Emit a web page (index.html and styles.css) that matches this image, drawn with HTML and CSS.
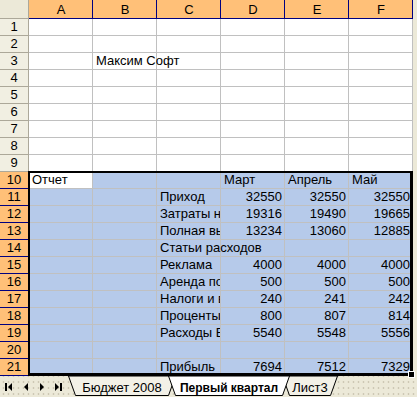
FILE: index.html
```html
<!DOCTYPE html>
<html lang="ru">
<head>
    <meta charset="UTF-8">
    <title>Первый квартал</title>
    <link rel="stylesheet" href="styles.css">
</head>
<body>
<div class="sheet">
    <div class="row head">
        <div class="corner"></div>
        <div class="colhead">A</div>
        <div class="colhead">B</div>
        <div class="colhead">C</div>
        <div class="colhead">D</div>
        <div class="colhead">E</div>
        <div class="colhead">F</div>
        <div class="edge"></div>
    </div>
    <div class="row">
        <div class="rowhead">1</div>
        <div class="cell"></div><div class="cell"></div><div class="cell"></div>
        <div class="cell"></div><div class="cell"></div><div class="cell"></div>
        <div class="edge"></div>
    </div>
    <div class="row">
        <div class="rowhead">2</div>
        <div class="cell"></div><div class="cell"></div><div class="cell"></div>
        <div class="cell"></div><div class="cell"></div><div class="cell"></div>
        <div class="edge"></div>
    </div>
    <div class="row">
        <div class="rowhead">3</div>
        <div class="cell"></div><div class="cell spill">Максим Софт</div><div class="cell"></div>
        <div class="cell"></div><div class="cell"></div><div class="cell"></div>
        <div class="edge"></div>
    </div>
    <div class="row">
        <div class="rowhead">4</div>
        <div class="cell"></div><div class="cell"></div><div class="cell"></div>
        <div class="cell"></div><div class="cell"></div><div class="cell"></div>
        <div class="edge"></div>
    </div>
    <div class="row">
        <div class="rowhead">5</div>
        <div class="cell"></div><div class="cell"></div><div class="cell"></div>
        <div class="cell"></div><div class="cell"></div><div class="cell"></div>
        <div class="edge"></div>
    </div>
    <div class="row">
        <div class="rowhead">6</div>
        <div class="cell"></div><div class="cell"></div><div class="cell"></div>
        <div class="cell"></div><div class="cell"></div><div class="cell"></div>
        <div class="edge"></div>
    </div>
    <div class="row">
        <div class="rowhead">7</div>
        <div class="cell"></div><div class="cell"></div><div class="cell"></div>
        <div class="cell"></div><div class="cell"></div><div class="cell"></div>
        <div class="edge"></div>
    </div>
    <div class="row">
        <div class="rowhead">8</div>
        <div class="cell"></div><div class="cell"></div><div class="cell"></div>
        <div class="cell"></div><div class="cell"></div><div class="cell"></div>
        <div class="edge"></div>
    </div>
    <div class="row">
        <div class="rowhead">9</div>
        <div class="cell"></div><div class="cell"></div><div class="cell"></div>
        <div class="cell"></div><div class="cell"></div><div class="cell"></div>
        <div class="edge"></div>
    </div>
    <div class="row sel">
        <div class="rowhead">10</div>
        <div class="cell active">Отчет</div><div class="cell"></div><div class="cell"></div>
        <div class="cell">Март</div><div class="cell">Апрель</div><div class="cell">Май</div>
        <div class="edge"></div>
    </div>
    <div class="row sel">
        <div class="rowhead">11</div>
        <div class="cell"></div><div class="cell"></div><div class="cell">Приход</div>
        <div class="cell num">32550</div><div class="cell num">32550</div><div class="cell num">32550</div>
        <div class="edge"></div>
    </div>
    <div class="row sel">
        <div class="rowhead">12</div>
        <div class="cell"></div><div class="cell"></div><div class="cell">Затраты на товары</div>
        <div class="cell num">19316</div><div class="cell num">19490</div><div class="cell num">19665</div>
        <div class="edge"></div>
    </div>
    <div class="row sel">
        <div class="rowhead">13</div>
        <div class="cell"></div><div class="cell"></div><div class="cell">Полная выручка</div>
        <div class="cell num">13234</div><div class="cell num">13060</div><div class="cell num">12885</div>
        <div class="edge"></div>
    </div>
    <div class="row sel">
        <div class="rowhead">14</div>
        <div class="cell"></div><div class="cell"></div><div class="cell spill">Статьи расходов</div>
        <div class="cell"></div><div class="cell"></div><div class="cell"></div>
        <div class="edge"></div>
    </div>
    <div class="row sel">
        <div class="rowhead">15</div>
        <div class="cell"></div><div class="cell"></div><div class="cell">Реклама</div>
        <div class="cell num">4000</div><div class="cell num">4000</div><div class="cell num">4000</div>
        <div class="edge"></div>
    </div>
    <div class="row sel">
        <div class="rowhead">16</div>
        <div class="cell"></div><div class="cell"></div><div class="cell">Аренда помещения</div>
        <div class="cell num">500</div><div class="cell num">500</div><div class="cell num">500</div>
        <div class="edge"></div>
    </div>
    <div class="row sel">
        <div class="rowhead">17</div>
        <div class="cell"></div><div class="cell"></div><div class="cell">Налоги и взносы</div>
        <div class="cell num">240</div><div class="cell num">241</div><div class="cell num">242</div>
        <div class="edge"></div>
    </div>
    <div class="row sel">
        <div class="rowhead">18</div>
        <div class="cell"></div><div class="cell"></div><div class="cell">Проценты</div>
        <div class="cell num">800</div><div class="cell num">807</div><div class="cell num">814</div>
        <div class="edge"></div>
    </div>
    <div class="row sel">
        <div class="rowhead">19</div>
        <div class="cell"></div><div class="cell"></div><div class="cell">Расходы Всего</div>
        <div class="cell num">5540</div><div class="cell num">5548</div><div class="cell num">5556</div>
        <div class="edge"></div>
    </div>
    <div class="row sel">
        <div class="rowhead">20</div>
        <div class="cell"></div><div class="cell"></div><div class="cell"></div>
        <div class="cell"></div><div class="cell"></div><div class="cell"></div>
        <div class="edge"></div>
    </div>
    <div class="row sel">
        <div class="rowhead">21</div>
        <div class="cell"></div><div class="cell"></div><div class="cell">Прибыль</div>
        <div class="cell num">7694</div><div class="cell num">7512</div><div class="cell num">7329</div>
        <div class="edge"></div>
    </div>
    <div class="selection"><span class="handle"></span></div>
</div>
<div class="tabbar">
    <svg class="nav" width="64" height="21" viewBox="0 0 64 21">
        <rect x="5" y="7" width="2" height="8" fill="#000"/>
        <polygon points="8,11 12,7 12,15" fill="#000"/>
        <polygon points="24,11 28,7 28,15" fill="#000"/>
        <polygon points="44,11 40,7 40,15" fill="#000"/>
        <polygon points="59,11 55,7 55,15" fill="#000"/>
        <rect x="60" y="7" width="2" height="8" fill="#000"/>
    </svg>
    <div class="tabs">
        <div class="tab tab-budget">
            <svg class="tab-shape" width="108" height="21" viewBox="0 0 108 21">
                <polygon points="0.5,0 7.5,19.5 100.5,19.5 107.5,0" fill="#F3F1E7" stroke="#000"/>
            </svg>
            <span>Бюджет 2008</span>
        </div>
        <div class="tab tab-active">
            <svg class="tab-shape" width="122" height="21" viewBox="0 0 122 21">
                <polygon points="0.5,0 7.5,19.5 114.5,19.5 121.5,0" fill="#fff" stroke="#000"/>
            </svg>
            <span>Первый квартал</span>
        </div>
        <div class="tab tab-list">
            <svg class="tab-shape" width="56" height="21" viewBox="0 0 56 21">
                <polygon points="0.5,0 7.5,19.5 48.5,19.5 55.5,0" fill="#F3F1E7" stroke="#000"/>
            </svg>
            <span>Лист3</span>
        </div>
    </div>
</div>
</body>
</html>
```

FILE: styles.css
```css
body {
    margin: 0;
    background: #fff;
    font-family: "Liberation Sans", Arial, sans-serif;
    font-size: 13px;
    color: #000;
}
.sheet {
    position: relative;
}
.row {
    display: grid;
    grid-template-columns: 29px repeat(6, 64px) 1fr;
    height: 17px;
}
.row > div {
    box-sizing: border-box;
    border-right: 1px solid #c0c0c0;
    border-bottom: 1px solid #c0c0c0;
    line-height: 16px;
    white-space: nowrap;
    overflow: hidden;
    padding: 0 2px 0 3px;
}
.head {
    height: 19px;
}
.corner {
    background: #ECE9D8;
    border-color: #ACA899 !important;
}
.colhead {
    background: #FFC078;
    border-color: #000080 !important;
    text-align: center;
    padding-top: 2px !important;
}
.rowhead {
    background: #F1EFE2;
    border-color: #ACA899 !important;
    text-align: center;
    padding: 0 !important;
}
.sel .rowhead {
    background: #FFC078;
    border-color: #000080 !important;
}
.sel .cell {
    background: #B6CAEA;
}
.sel .cell.active {
    background: #fff;
}
.num {
    text-align: right;
}
.spill {
    overflow: visible !important;
    position: relative;
    z-index: 1;
}
.edge {
    background: #ECE9D8;
    border: none !important;
}
.selection {
    position: absolute;
    left: 28px;
    top: 171px;
    width: 385px;
    height: 205px;
    box-sizing: border-box;
    border-style: solid;
    border-color: #000;
    border-width: 2px 3px 3px 2px;
    z-index: 2;
}
.handle {
    position: absolute;
    right: -5px;
    bottom: -5px;
    width: 5px;
    height: 5px;
    background: #000;
    border: 1px solid #fff;
}

/* sheet tabs */
.tabbar {
    display: flex;
    height: 21px;
    background-color: #ECE9D8;
    background-image: radial-gradient(circle, #CDC8B4 0.8px, transparent 1.2px);
    background-size: 5px 6px;
    background-position: 1px 3px;
    font-size: 13px;
}
.nav {
    display: block;
    flex: none;
}
.tabs {
    display: flex;
    margin-left: 4px;
}
.tab {
    position: relative;
    height: 21px;
    text-align: center;
}
.tab span {
    position: relative;
    display: block;
    line-height: 15px;
    padding-top: 4px;
}
.tab-shape {
    position: absolute;
    left: 0;
    top: 0;
}
.tab-budget {
    width: 108px;
}
.tab-active {
    width: 122px;
    margin-left: -8px;
    z-index: 1;
    font-size: 12px;
    font-weight: bold;
}
.tab-active span {
    padding-top: 5px;
}
.tab-list {
    width: 56px;
    margin-left: -8px;
}
```
